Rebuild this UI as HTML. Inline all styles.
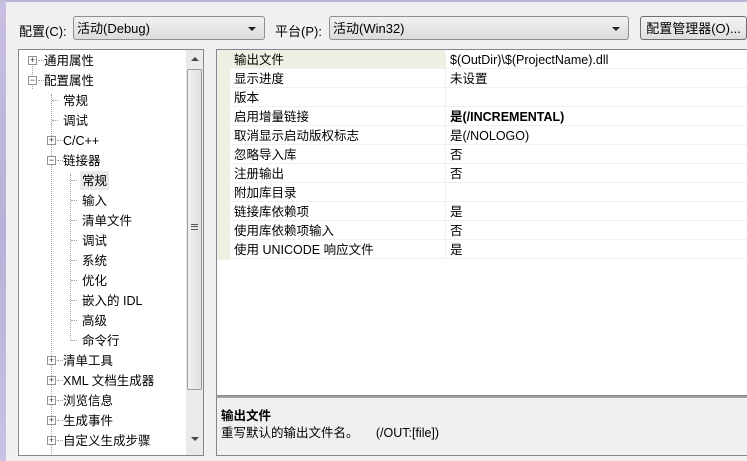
<!DOCTYPE html>
<html><head><meta charset="utf-8"><style>
*{margin:0;padding:0;box-sizing:border-box}
body{width:747px;height:461px;background:#f0f0f0;position:relative;overflow:hidden;font-family:"Liberation Sans","Noto Sans CJK SC",sans-serif;font-size:12px;color:#000}
.a{position:absolute}
.lstrip{left:0;top:0;width:6px;height:461px;background:linear-gradient(#c9c0e0,#b7b0d8 50%,#c8c2e6)}
.combo{border:1px solid #8e8f8f;border-radius:3px;background:linear-gradient(#f2f2f2,#e6e6e6 50%,#dcdcdc);height:24px;line-height:23px;padding-left:3px;font-size:13px}
.arrow{position:absolute;right:8px;top:10px;width:0;height:0;border-left:4px solid transparent;border-right:4px solid transparent;border-top:4px solid #222}
.btn{border:1px solid #707070;border-radius:3px;background:linear-gradient(#f2f2f2,#ebebeb 50%,#dddddd);height:24px;line-height:23px;text-align:center;font-size:13px}
.tree{left:18px;top:49px;width:186px;height:407px;background:#fff;border:1px solid #828790}
.ti{position:absolute;height:18px;line-height:20px;font-size:12.5px;white-space:nowrap}
.pm{position:absolute;width:9px;height:9px;border:1px solid #919191;background:#fff;font-size:9px;line-height:7px;text-align:center;color:#333}
.vl{position:absolute;border-left:1px dotted #a0a0a0}
.hl{position:absolute;border-top:1px dotted #a0a0a0;width:6px}
.sb{left:186px;top:50px;width:17px;height:405px;background:#eaeaea}
.grid{left:216px;top:49px;width:531px;height:347px;background:#fff;border:1px solid #828790;border-right:none}
.row{position:absolute;left:13px;width:518px;height:19px;border-bottom:1px solid #f0f0f0;font-size:12.5px;line-height:20px}
.row span{position:absolute;top:0}
.desc{left:216px;top:396px;width:531px;height:60px;border:1px solid #828790;border-right:none;background:#f0f0f0;border-top:2px solid #a0a0a0}
</style></head><body>
<div class="a lstrip"></div>
<div class="a" style="left:6px;top:0;width:741px;height:2px;background:#b9b3d3"></div>
<div class="a" style="left:19px;top:21px;font-size:13px">配置(C):</div>
<div class="a combo" style="left:73px;top:16px;width:192px">活动(Debug)<div class="arrow"></div></div>
<div class="a" style="left:275px;top:21px;font-size:13px">平台(P):</div>
<div class="a combo" style="left:329px;top:16px;width:300px">活动(Win32)<div class="arrow"></div></div>
<div class="a btn" style="left:640px;top:16px;width:107px">配置管理器(O)...</div>

<div class="a tree">
<div class="vl" style="left:13px;top:14px;height:25px"></div>
<div class="vl" style="left:32px;top:44px;height:360px"></div>
<div class="vl" style="left:51px;top:124px;height:166px"></div>
<div class="pm" style="left:9px;top:6px">+</div><div class="hl" style="left:19px;top:10px"></div><div class="ti" style="left:25px;top:1px">通用属性</div>
<div class="pm" style="left:9px;top:26px">−</div><div class="hl" style="left:19px;top:30px"></div><div class="ti" style="left:25px;top:21px">配置属性</div>
<div class="hl" style="left:33px;top:50px"></div><div class="ti" style="left:44px;top:41px">常规</div>
<div class="hl" style="left:33px;top:70px"></div><div class="ti" style="left:44px;top:61px">调试</div>
<div class="pm" style="left:28px;top:86px">+</div><div class="hl" style="left:38px;top:90px"></div><div class="ti" style="left:44px;top:81px">C/C++</div>
<div class="pm" style="left:28px;top:106px">−</div><div class="hl" style="left:38px;top:110px"></div><div class="ti" style="left:44px;top:101px">链接器</div>
<div class="hl" style="left:52px;top:130px"></div><div class="ti" style="left:61px;top:121px;height:19px;background:#e8e8e8;padding:0 2px">常规</div>
<div class="hl" style="left:52px;top:150px"></div><div class="ti" style="left:63px;top:141px">输入</div>
<div class="hl" style="left:52px;top:170px"></div><div class="ti" style="left:63px;top:161px">清单文件</div>
<div class="hl" style="left:52px;top:190px"></div><div class="ti" style="left:63px;top:181px">调试</div>
<div class="hl" style="left:52px;top:210px"></div><div class="ti" style="left:63px;top:201px">系统</div>
<div class="hl" style="left:52px;top:230px"></div><div class="ti" style="left:63px;top:221px">优化</div>
<div class="hl" style="left:52px;top:250px"></div><div class="ti" style="left:63px;top:241px">嵌入的 IDL</div>
<div class="hl" style="left:52px;top:270px"></div><div class="ti" style="left:63px;top:261px">高级</div>
<div class="hl" style="left:52px;top:290px"></div><div class="ti" style="left:63px;top:281px">命令行</div>
<div class="pm" style="left:28px;top:306px">+</div><div class="hl" style="left:38px;top:310px"></div><div class="ti" style="left:44px;top:301px">清单工具</div>
<div class="pm" style="left:28px;top:326px">+</div><div class="hl" style="left:38px;top:330px"></div><div class="ti" style="left:44px;top:321px">XML 文档生成器</div>
<div class="pm" style="left:28px;top:346px">+</div><div class="hl" style="left:38px;top:350px"></div><div class="ti" style="left:44px;top:341px">浏览信息</div>
<div class="pm" style="left:28px;top:366px">+</div><div class="hl" style="left:38px;top:370px"></div><div class="ti" style="left:44px;top:361px">生成事件</div>
<div class="pm" style="left:28px;top:386px">+</div><div class="hl" style="left:38px;top:390px"></div><div class="ti" style="left:44px;top:381px">自定义生成步骤</div>
</div>
<div class="a sb">
<div class="a" style="left:5px;top:7px;border-left:4px solid transparent;border-right:4px solid transparent;border-bottom:4px solid #444"></div>
<div class="a" style="left:1px;top:19px;width:15px;height:321px;border:1px solid #9c9c9c;border-radius:2px;background:linear-gradient(90deg,#f0f0f0,#e0e0e0)"></div>
<div class="a" style="left:5px;top:174px;width:7px;height:6px;border-top:1px solid #555;border-bottom:1px solid #555"><div style="margin-top:1px;border-top:1px solid #555"></div></div>
<div class="a" style="left:5px;top:387px;border-left:4px solid transparent;border-right:4px solid transparent;border-top:4px solid #444"></div>
</div>

<div class="a grid">
<div class="a" style="left:0;top:0;width:13px;height:210px;background:#f0efe4"></div>
<div class="row" style="top:0;background:linear-gradient(90deg,#f0efe4 0,#f0efe4 216px,#fff 216px)"><span style="left:4px">输出文件</span><span style="left:220px">$(OutDir)\$(ProjectName).dll</span></div>
<div class="row" style="top:19px"><span style="left:4px">显示进度</span><span style="left:220px">未设置</span></div>
<div class="row" style="top:38px"><span style="left:4px">版本</span></div>
<div class="row" style="top:57px"><span style="left:4px">启用增量链接</span><span style="left:220px;font-weight:bold">是(/INCREMENTAL)</span></div>
<div class="row" style="top:76px"><span style="left:4px">取消显示启动版权标志</span><span style="left:220px">是(/NOLOGO)</span></div>
<div class="row" style="top:95px"><span style="left:4px">忽略导入库</span><span style="left:220px">否</span></div>
<div class="row" style="top:114px"><span style="left:4px">注册输出</span><span style="left:220px">否</span></div>
<div class="row" style="top:133px"><span style="left:4px">附加库目录</span></div>
<div class="row" style="top:152px"><span style="left:4px">链接库依赖项</span><span style="left:220px">是</span></div>
<div class="row" style="top:171px"><span style="left:4px">使用库依赖项输入</span><span style="left:220px">否</span></div>
<div class="row" style="top:190px"><span style="left:4px">使用 UNICODE 响应文件</span><span style="left:220px">是</span></div>
<div class="a" style="left:228px;top:0;width:1px;height:210px;background:#f0f0f0"></div>
</div>
<div class="a desc">
<div class="a" style="left:4px;top:7px;font-weight:bold;font-size:12.5px">输出文件</div>
<div class="a" style="left:4px;top:24px;font-size:12.5px;white-space:pre">重写默认的输出文件名。     (/OUT:[file])</div>
</div>
</body></html>
